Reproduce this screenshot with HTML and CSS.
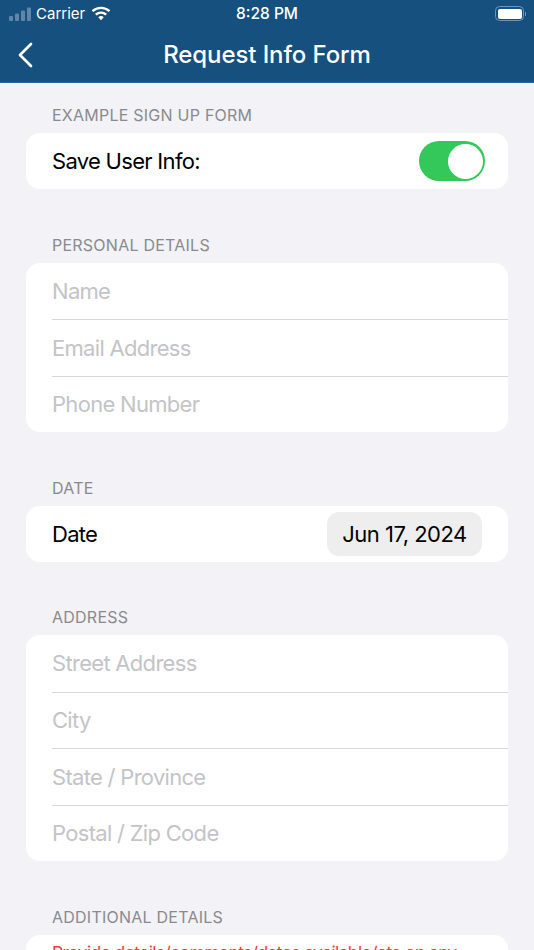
FILE: index.html
```html
<!DOCTYPE html>
<html lang="en">
<head>
<meta charset="utf-8">
<title>Request Info Form</title>
<link rel="stylesheet" href="styles.css">
</head>
<body>
<div class="screen">
  <header class="header">
    <div class="status">
      <div class="status-left">
        <svg class="signal" width="22" height="14" viewBox="0 0 22 14"><rect x="0" y="9" width="4" height="5" rx="1"/><rect x="6" y="6.500" width="4" height="7.500" rx="1"/><rect x="12" y="3.500" width="4" height="10.500" rx="1"/><rect x="18" y="0.500" width="4" height="13.500" rx="1"/></svg>
        <span>Carrier</span>
        <svg class="wifi" width="20" height="15" viewBox="0 0 20 15"><path d="M1.500 5.200A12.500 12.500 0 0 1 18.500 5.200" fill="none" stroke="#fff" stroke-width="2.400"/><path d="M4.800 8.600A7.800 7.800 0 0 1 15.200 8.600" fill="none" stroke="#fff" stroke-width="2.400"/><path d="M7.300 11.200A3.600 3.600 0 0 1 12.700 11.200L10 14.300Z" fill="#fff"/></svg>
      </div>
      <span class="clock">8:28 PM</span>
      <div class="status-right">
        <div class="battery"><div class="battery-fill"></div></div>
        <div class="battery-cap"></div>
      </div>
    </div>
    <div class="nav">
      <svg class="back" width="16" height="26" viewBox="0 0 16 26"><path d="M14 2L3 13L14 24" fill="none" stroke="#fff" stroke-width="2.700" stroke-linecap="round" stroke-linejoin="round"/></svg>
      <h1>Request Info Form</h1>
    </div>
  </header>
  <main class="content">
    <section class="group">
      <h2>EXAMPLE SIGN UP FORM</h2>
      <div class="card">
        <div class="row row-control">
          <span class="value">Save User Info:</span>
          <div class="switch"><div class="knob"></div></div>
        </div>
      </div>
    </section>
    <section class="group">
      <h2>PERSONAL DETAILS</h2>
      <div class="card">
        <div class="row">Name</div>
        <div class="row">Email Address</div>
        <div class="row">Phone Number</div>
      </div>
    </section>
    <section class="group">
      <h2>DATE</h2>
      <div class="card">
        <div class="row row-control">
          <span class="value">Date</span>
          <span class="date-pill">Jun 17, 2024</span>
        </div>
      </div>
    </section>
    <section class="group">
      <h2>ADDRESS</h2>
      <div class="card">
        <div class="row">Street Address</div>
        <div class="row">City</div>
        <div class="row">State / Province</div>
        <div class="row">Postal / Zip Code</div>
      </div>
    </section>
    <section class="group">
      <h2>ADDITIONAL DETAILS</h2>
      <div class="card">
        <div class="note">Provide details/comments/dates available/etc on any</div>
      </div>
    </section>
  </main>
</div>
</body>
</html>
```
FILE: styles.css
```css
* { box-sizing: border-box; }
html, body { margin: 0; padding: 0; }
body { width: 534px; height: 950px; overflow: hidden; font-family: Inter, "Liberation Sans", sans-serif; }
.screen { width: 534px; height: 950px; background: #f2f2f7; overflow: hidden; }
.header { height: 83px; background: #15507f; color: #fff; border-bottom: 1px solid #2c6596; }
.status { height: 27px; padding: 0 8px 0 9px; display: flex; align-items: center; justify-content: space-between; position: relative; font-size: 15px; }
.status-left { display: flex; align-items: center; gap: 5px; }
.signal { fill: #5f86a6; }
.wifi { margin-left: 1px; }
.clock { position: absolute; left: 0; right: 0; text-align: center; font-size: 15.500px; font-weight: 500; }
.status-right { display: flex; align-items: center; gap: 1px; }
.battery { width: 29px; height: 15px; border: 1.500px solid #6f96b6; border-radius: 4.500px; padding: 1.500px; }
.battery-fill { height: 100%; background: #fff; border-radius: 2px; }
.battery-cap { width: 1px; height: 4px; background: #6f96b6; }
.nav { height: 55px; display: flex; align-items: center; justify-content: center; position: relative; }
.back { position: absolute; left: 17px; top: 15px; }
.nav h1 { margin: 0; font-size: 24px; font-weight: 500; letter-spacing: -0.100px; }
.content { padding: 22px 26px 0; }
.group { margin-bottom: 45.500px; }
.group h2 { margin: 0 0 0 26px; height: 28px; font-size: 16px; font-weight: 400; letter-spacing: 0.240px; color: #8a8a8e; line-height: 20px; }
.card { background: #fff; border-radius: 14px; overflow: hidden; }
.row { height: 56.500px; margin-left: 26px; display: flex; align-items: center; font-size: 22px; letter-spacing: -0.700px; color: #c4c4c7; border-top: 1px solid #d6d6d8; }
.row:first-child { border-top: none; }
.row-control { height: 56px; margin-right: 26px; color: #000; justify-content: space-between; }
.switch { width: 66px; height: 40px; background: #34c759; border-radius: 20px; padding: 2.500px; display: flex; justify-content: flex-end; margin-right: -3px; }
.knob { width: 35px; height: 35px; background: #fff; border-radius: 50%; }
.date-pill { background: #eeeeef; border-radius: 12px; height: 44px; width: 155px; display: flex; align-items: center; justify-content: center; letter-spacing: -0.500px; }
.note { margin-left: 26px; padding-top: 7px; font-size: 17.500px; letter-spacing: -0.620px; color: #ff3b30; white-space: nowrap; height: 40px; }
```
